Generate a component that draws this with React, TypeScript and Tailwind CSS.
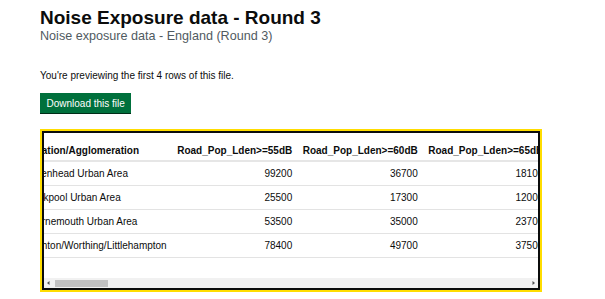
import { useEffect, useRef } from 'react'

interface PreviewRow {
  area: string
  values: number[]
}

const headers = [
  'Road_Pop_Lden>=55dB',
  'Road_Pop_Lden>=60dB',
  'Road_Pop_Lden>=65dB',
  'Road_Pop_Lden>=70dB',
  'Road_Pop_Lden>=75dB',
  'Road_Pop_Lnight>=50dB',
]

const rows: PreviewRow[] = [
  { area: 'Birkenhead Urban Area', values: [99200, 36700, 18100, 6300, 700, 28400] },
  { area: 'Blackpool Urban Area', values: [25500, 17300, 12000, 4100, 300, 14900] },
  { area: 'Bournemouth Urban Area', values: [53500, 35000, 23700, 8800, 900, 30200] },
  { area: 'Brighton/Worthing/Littlehampton', values: [78400, 49700, 37500, 13600, 1400, 45100] },
]

function ScrollArrow({ direction }: { direction: 'left' | 'right' }) {
  return (
    <svg width="9" height="10" viewBox="0 0 9 10" className="shrink-0">
      {direction === 'left' ? (
        <path d="M3 5 L5.5 3 L5.5 7 Z" fill="#505050" />
      ) : (
        <path d="M6 5 L3.5 3 L3.5 7 Z" fill="#505050" />
      )}
    </svg>
  )
}

export default function App() {
  const scrollRef = useRef<HTMLDivElement>(null)

  // the preview opens part-way across the first column
  useEffect(() => {
    if (scrollRef.current) {
      scrollRef.current.scrollLeft = 20
    }
  }, [])

  return (
    <div className="min-h-screen bg-white pl-[40px] pt-[8px] font-['Liberation_Sans',Arial,sans-serif] text-[#0b0c0c]">
      <h1 className="text-[19px] font-bold leading-[19px]">Noise Exposure data - Round 3</h1>
      <p className="mt-[2px] text-[12.6px] leading-[15px] text-[#505a5f]">Noise exposure data - England (Round 3)</p>

      <p className="mt-[25px] text-[10px] leading-[13px]">You're previewing the first 4 rows of this file.</p>

      <button
        type="button"
        className="mt-[11px] flex h-[20px] items-center bg-[#00703c] px-[6.5px] text-[10px] leading-[13px] text-white shadow-[0_1px_0_#002d18]"
      >
        Download this file
      </button>

      <div className="mt-[16px] w-[502px] border-2 border-[#ffdd00]">
        <div className="border-2 border-[#0b0c0c]">
          <div ref={scrollRef} className="overflow-hidden pb-[20px]">
            <table className="mt-[6px] border-collapse text-[10px] leading-[13px]">
              <thead>
                <tr className="border-b-2 border-[#e6e6e6]">
                  <th className="whitespace-nowrap pb-[3px] pt-[5px] pr-[10.5px] text-left font-bold">Location/Agglomeration</th>
                  {headers.map((header) => (
                    <th key={header} className="whitespace-nowrap pb-[3px] pt-[5px] pr-[10.5px] text-right font-bold">
                      {header}
                    </th>
                  ))}
                </tr>
              </thead>
              <tbody>
                {rows.map((row) => (
                  <tr key={row.area} className="border-b border-[#e3e3e3]">
                    <td className="whitespace-nowrap py-[5px] pr-[10.5px]">{row.area}</td>
                    {row.values.map((value, index) => (
                      <td key={headers[index]} className="whitespace-nowrap py-[5px] pr-[10.5px] text-right">
                        {value}
                      </td>
                    ))}
                  </tr>
                ))}
              </tbody>
            </table>
          </div>

          <div className="flex h-[10px] items-center bg-[#f1f1f1]">
            <ScrollArrow direction="left" />
            <div className="flex-1">
              <div className="ml-[2px] h-[7px] w-[53px] bg-[#c1c1c1]" />
            </div>
            <ScrollArrow direction="right" />
          </div>
        </div>
      </div>
    </div>
  )
}
